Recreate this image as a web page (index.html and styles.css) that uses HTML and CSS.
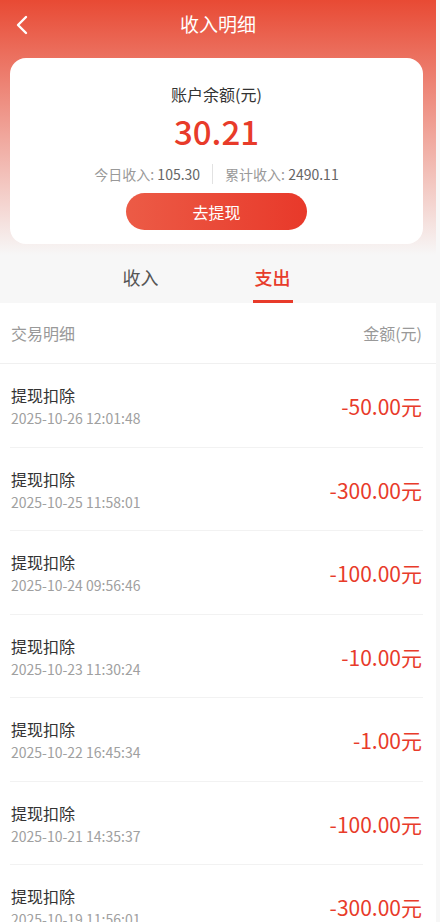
FILE: index.html
```html
<!DOCTYPE html>
<html lang="zh-CN">
<head>
    <meta charset="UTF-8">
    <meta name="viewport" content="width=device-width, initial-scale=1.0">
    <title>收入明细</title>
    <link rel="stylesheet" href="styles.css">
</head>
<body>

<div class="page">
    <div class="top">
        <div class="nav">
            <div class="back">
                <svg width="14" height="20" viewBox="0 0 14 20">
                    <polyline points="11,2 3,10 11,18" fill="none" stroke="#fff" stroke-width="2.4" stroke-linecap="round" stroke-linejoin="round"/>
                </svg>
            </div>
            <div class="nav-title">收入明细</div>
            <div></div>
        </div>

        <div class="card">
            <div class="card-label">账户余额(元)</div>
            <div class="balance">30.21</div>
            <div class="stats">
                <span class="stat"><span class="stat-label">今日收入: </span>105.30</span>
                <span class="stat-sep"></span>
                <span class="stat"><span class="stat-label">累计收入: </span>2490.11</span>
            </div>
            <button class="withdraw">去提现</button>
        </div>

        <div class="tabs">
            <div class="tab">
                <span>收入</span>
                <i></i>
            </div>
            <div class="tab active">
                <span>支出</span>
                <i></i>
            </div>
        </div>
    </div>

    <div class="list">
        <div class="list-head">
            <span>交易明细</span>
            <span>金额(元)</span>
        </div>
        <div class="rows" id="rows"></div>
    </div>
</div>

<script>
    const records = [
        ['2025-10-26 12:01:48', '-50.00'],
        ['2025-10-25 11:58:01', '-300.00'],
        ['2025-10-24 09:56:46', '-100.00'],
        ['2025-10-23 11:30:24', '-10.00'],
        ['2025-10-22 16:45:34', '-1.00'],
        ['2025-10-21 14:35:37', '-100.00'],
        ['2025-10-19 11:56:01', '-300.00']
    ];

    const rows = document.getElementById('rows');
    records.forEach(function (r) {
        const row = document.createElement('div');
        row.className = 'row';
        row.innerHTML =
            '<div class="row-info">' +
                '<div class="row-title">提现扣除</div>' +
                '<div class="row-time">' + r[0] + '</div>' +
            '</div>' +
            '<div class="row-amount">' + r[1] + '元</div>';
        rows.appendChild(row);
    });
</script>

</body>
</html>
```

FILE: styles.css
```css
html, body {
    margin: 0;
    padding: 0;
}

body {
    font-family: "Noto Sans CJK SC", "Noto Sans", sans-serif;
    background: #f7f7f7;
    color: #333;
}

.page {
    width: 436px;
    background: #f7f7f7;
}

.top {
    background: linear-gradient(180deg, #e84a34 0, #f7f7f7 255px);
    padding: 0 13px 0 10px;
}

.nav {
    display: grid;
    grid-template-columns: 1fr auto 1fr;
    align-items: center;
    height: 48px;
    margin: 0 -13px 0 -10px;
}

.back {
    display: flex;
    padding-left: 15px;
    padding-top: 1px;
}

.nav-title {
    color: #fff;
    font-size: 19px;
    line-height: 48px;
}

.card {
    margin-top: 10px;
    background: #fff;
    border-radius: 16px;
    padding: 25px 0 14px;
    text-align: center;
}

.card-label {
    font-size: 16px;
    line-height: 22px;
    color: #333;
}

.balance {
    margin-top: 4px;
    font-size: 33px;
    line-height: 44px;
    font-weight: 500;
    color: #e83b2a;
}

.stats {
    margin-top: 11px;
    display: flex;
    justify-content: center;
    align-items: center;
    gap: 12px;
    font-size: 14px;
    line-height: 20px;
    color: #666;
}

.stat-label {
    color: #999;
}

.stat-sep {
    width: 1px;
    height: 20px;
    background: #e2e2e2;
}

.withdraw {
    margin-top: 9px;
    width: 181px;
    height: 37px;
    border: none;
    border-radius: 20px;
    background: linear-gradient(90deg, #ec5b46, #e8392a);
    color: #fff;
    font-family: inherit;
    font-size: 16px;
    cursor: pointer;
}

.tabs {
    display: grid;
    grid-template-columns: 132px 132px;
    justify-content: center;
    padding-right: 20px;
}

.tab {
    display: flex;
    flex-direction: column;
    align-items: center;
    padding-top: 20px;
    font-size: 18px;
    line-height: 26px;
    color: #555;
}

.tab i {
    display: block;
    width: 40px;
    height: 3px;
    margin-top: 10px;
}

.tab.active {
    color: #e83b2a;
    font-weight: 500;
}

.tab.active i {
    background: #e83b2a;
}

.list {
    background: #fff;
}

.list-head {
    display: flex;
    justify-content: space-between;
    align-items: center;
    height: 60px;
    padding: 0 14px 0 11px;
    font-size: 16px;
    color: #999;
    border-bottom: 1px solid #f0f0f0;
}

.rows {
    padding: 0 13px 0 10px;
}

.row {
    display: flex;
    justify-content: space-between;
    align-items: center;
    padding: 20px 1px 18.5px 1px;
    border-bottom: 1px solid #f2f2f2;
}

.row-title {
    font-size: 16px;
    line-height: 22px;
    color: #333;
}

.row-time {
    margin-top: 2px;
    font-size: 14px;
    line-height: 20px;
    color: #a0a0a0;
}

.row-amount {
    font-size: 21px;
    color: #e83b2a;
}
```
